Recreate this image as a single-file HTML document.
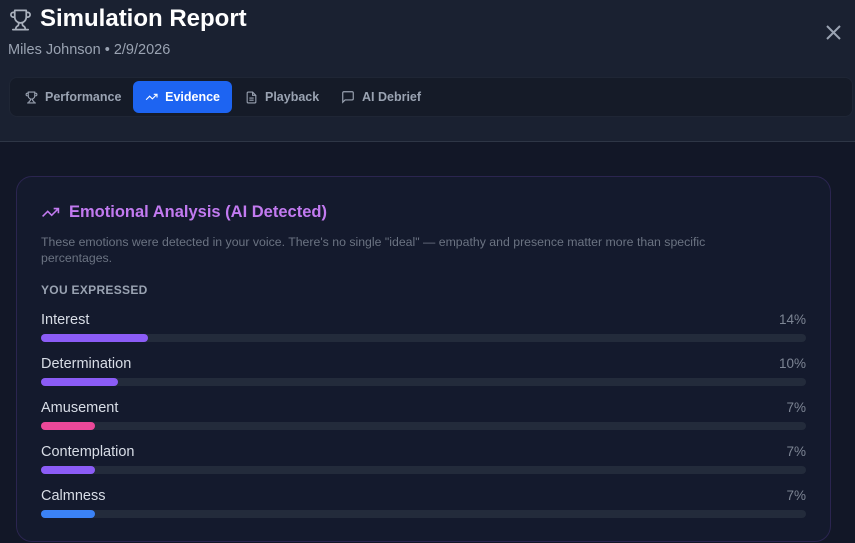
<!DOCTYPE html>
<html><head><style>
*{margin:0;padding:0;box-sizing:border-box}
html,body{width:855px;height:543px;overflow:hidden}
body{background:#121727;font-family:"Liberation Sans",sans-serif;position:relative}
.hdr{position:absolute;left:0;top:0;width:855px;height:142px;background:#1a2131;border-bottom:1px solid #2e3646}
.title{position:absolute;left:40px;top:5px;color:#fff;font-size:24px;font-weight:bold}
.sub{position:absolute;left:8px;top:42px;color:#9aa3b2;font-size:14.5px}
.tabs{position:absolute;left:9px;top:77px;width:844px;height:40px;background:#151b28;border:1px solid #1f2635;border-radius:8px}
.tab{position:absolute;top:3px;height:32px;line-height:32px;font-size:12.5px;font-weight:bold;color:#9aa3b2;display:flex;align-items:center;gap:7px}
.tab.act{background:#1d64f2;color:#fff;border-radius:6px;padding:0 12px;width:99px}
.card{position:absolute;left:16px;top:176px;width:815px;height:366px;background:#141a2d;border:1px solid #2b2550;border-radius:16px}
.h2{position:absolute;left:41px;top:203px;color:#c27af0;font-size:16.5px;font-weight:bold;display:flex;align-items:center;gap:9px}
.desc{position:absolute;left:41px;top:234px;width:715px;color:#6b7382;font-size:12.3px;line-height:16px}
.lbl{position:absolute;left:41px;top:283px;color:#9aa3b2;font-size:12px;font-weight:bold;letter-spacing:.3px}
.row{position:absolute;left:41px;width:765px}
.row .n{position:absolute;left:0;top:0;color:#d8dde6;font-size:14.5px}
.row .p{position:absolute;right:0;top:0;color:#7d8594;font-size:13.5px}
.row .t{position:absolute;left:0;top:22px;width:765px;height:8px;background:#232b3b;border-radius:4px}
.row .f{height:8px;border-radius:4px}
</style></head><body>
<div class="hdr">
<svg style="position:absolute;left:9px;top:8px" width="23" height="24" viewBox="0 0 24 24" fill="none" stroke="#aab1bd" stroke-width="1.8" stroke-linecap="round" stroke-linejoin="round"><path d="M6 9H4.5a2.5 2.5 0 0 1 0-5H6M18 9h1.5a2.5 2.5 0 0 0 0-5H18M4 22h16M10 14.66V17c0 .55-.47.98-.97 1.21C7.85 18.75 7 20.24 7 22M14 14.66V17c0 .55.47.98.97 1.21C16.15 18.75 17 20.24 17 22M18 2H6v7a6 6 0 0 0 12 0V2z"/></svg>
<div class="title">Simulation Report</div>
<div class="sub">Miles Johnson • 2/9/2026</div>
<svg style="position:absolute;left:825px;top:24px" width="17" height="17" viewBox="0 0 17 17" stroke="#9aa3b2" stroke-width="2"><path d="M2 2L15 15M15 2L2 15"/></svg>
<div class="tabs">
<div class="tab" style="left:15px"><svg width="13" height="13" viewBox="0 0 24 24" fill="none" stroke="#9aa3b2" stroke-width="2"><path d="M6 9H4.5a2.5 2.5 0 0 1 0-5H6M18 9h1.5a2.5 2.5 0 0 0 0-5H18M4 22h16M10 14.66V17c0 .55-.47.98-.97 1.21C7.85 18.75 7 20.24 7 22M14 14.66V17c0 .55.47.98.97 1.21C16.15 18.75 17 20.24 17 22M18 2H6v7a6 6 0 0 0 12 0V2z"/></svg>Performance</div>
<div class="tab act" style="left:123px"><svg width="14" height="14" viewBox="0 0 24 24" fill="none" stroke="#fff" stroke-width="2"><path d="M22 7l-8.5 8.5-5-5L2 17M16 7h6v6"/></svg>Evidence</div>
<div class="tab" style="left:235px"><svg width="13" height="13" viewBox="0 0 24 24" fill="none" stroke="#9aa3b2" stroke-width="2"><path d="M14 2H6a2 2 0 0 0-2 2v16a2 2 0 0 0 2 2h12a2 2 0 0 0 2-2V8zM14 2v6h6M16 13H8M16 17H8"/></svg>Playback</div>
<div class="tab" style="left:331px"><svg width="14" height="14" viewBox="0 0 24 24" fill="none" stroke="#9aa3b2" stroke-width="2"><path d="M21 15a2 2 0 0 1-2 2H7l-4 4V5a2 2 0 0 1 2-2h14a2 2 0 0 1 2 2z"/></svg>AI Debrief</div>
</div>
</div>
<div class="card"></div>
<div class="h2"><svg width="19" height="19" viewBox="0 0 24 24" fill="none" stroke="#c27af0" stroke-width="2"><path d="M22 7l-8.5 8.5-5-5L2 17M16 7h6v6"/></svg>Emotional Analysis (AI Detected)</div>
<div class="desc">These emotions were detected in your voice. There's no single "ideal" — empathy and presence matter more than specific percentages.</div>
<div class="lbl">YOU EXPRESSED</div>
<div class="row" style="top:312px"><div class="n">Interest</div><div class="p">14%</div><div class="t"><div class="f" style="width:107px;background:#8b5cf6"></div></div></div>
<div class="row" style="top:356px"><div class="n">Determination</div><div class="p">10%</div><div class="t"><div class="f" style="width:77px;background:#8b5cf6"></div></div></div>
<div class="row" style="top:400px"><div class="n">Amusement</div><div class="p">7%</div><div class="t"><div class="f" style="width:54px;background:#ec4899"></div></div></div>
<div class="row" style="top:444px"><div class="n">Contemplation</div><div class="p">7%</div><div class="t"><div class="f" style="width:54px;background:#8b5cf6"></div></div></div>
<div class="row" style="top:488px"><div class="n">Calmness</div><div class="p">7%</div><div class="t"><div class="f" style="width:54px;background:#3b82f6"></div></div></div>
</body></html>
